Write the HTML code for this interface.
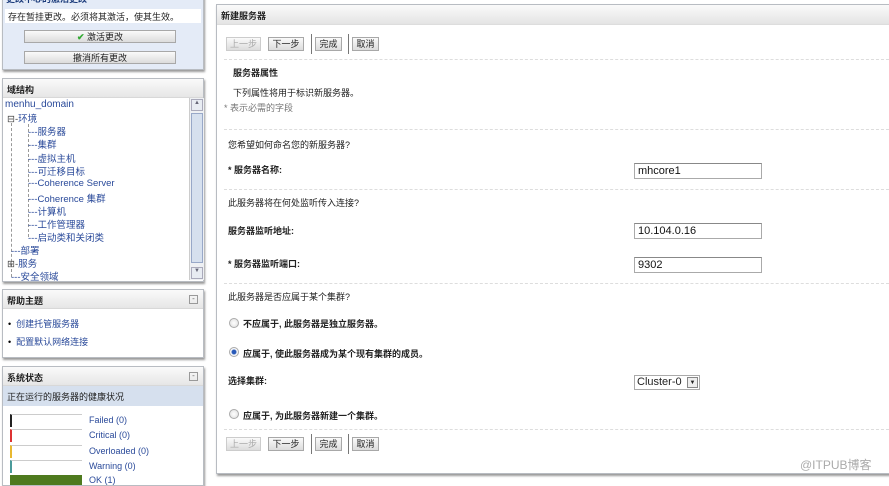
<!DOCTYPE html>
<html><head><meta charset="utf-8"><style>
*{margin:0;padding:0;box-sizing:border-box}
body{width:889px;height:479px;overflow:hidden;background:#fff;font-family:"Liberation Sans","Noto Sans CJK SC",sans-serif;font-size:9px;color:#222;position:relative}
.a{position:absolute;white-space:nowrap}
.pan{position:absolute;border:1px solid #b8bcc2;box-shadow:1px 2px 2px #9a9a9a;background:#fff}
.hd{position:absolute;left:0;right:0;top:0;height:19px;background:linear-gradient(#fafafa,#e6e6e6);border-bottom:1px solid #d8d8d8;font-weight:bold;font-size:9px;padding:4px 4px}
.btn{position:absolute;height:14px;border:1px solid #a8a8a8;background:linear-gradient(#fafafa,#dcdcdc);font-size:9px;text-align:center;line-height:12px;color:#222}
.dis{color:#aaa;border-color:#ccc}
.sep{position:absolute;width:1px;height:20px;background:#777}
.lnk{color:#2a4a9a}
.tr{font-size:9.5px}
.inp{position:absolute;left:634px;width:128px;height:16px;border:1px solid #aaa;border-top-color:#888;font-size:11px;padding:1px 3px;line-height:13px;color:#111}
.rad{position:absolute;left:229px;width:10px;height:10px;border-radius:50%;border:1px solid #aaa;background:radial-gradient(#fff,#ddd)}
.b{font-weight:bold}
.mn{position:absolute;right:5px;top:5px;width:9px;height:9px;border:1px solid #999;font-size:8px;line-height:6px;text-align:center;color:#666}
</style></head><body>

<!-- change center -->
<div class="pan" style="left:2px;top:-6px;width:202px;height:76px;background:#e4ebf7">
 <div class="a b" style="left:3px;top:-3px;color:#1a3a7a">更改中心的激活更改</div>
 <div class="a" style="left:2px;top:14px;width:196px;height:14px;background:#fff;padding:1px 3px">存在暂挂更改。必须将其激活，使其生效。</div>
 <div class="btn" style="left:21px;top:35px;width:152px;height:13px"><span style="color:#3a3;font-weight:bold">✔</span> 激活更改</div>
 <div class="btn" style="left:21px;top:56px;width:152px;height:13px">撤消所有更改</div>
</div>

<!-- domain structure -->
<div class="pan" style="left:2px;top:78px;width:202px;height:204px">
 <div class="hd">域结构</div>
 <div class="a" style="left:186px;top:19px;width:15px;height:182px;background:#eef0f3;border-left:1px solid #ccc">
  <div style="position:absolute;left:1px;top:1px;width:12px;height:12px;border:1px solid #aab;background:#e8ecf2;font-size:6px;text-align:center;color:#667">▲</div>
  <div style="position:absolute;left:1px;top:15px;width:12px;height:150px;border:1px solid #98a8c8;background:#d6e0ee"></div>
  <div style="position:absolute;left:1px;bottom:1px;width:12px;height:12px;border:1px solid #aab;background:#e8ecf2;font-size:6px;text-align:center;color:#667">▼</div>
 </div>
 <div class="a lnk" style="left:2px;top:20px;font-size:10px">menhu_domain</div>
 <div class="a" style="left:8px;top:44px;width:0;height:154px;border-left:1px dashed #999"></div>
 <div class="a" style="left:25px;top:45px;width:0;height:113px;border-left:1px dashed #999"></div>
 <div class="a lnk tr" style="left:4px;top:32px"><span style="color:#444">⊟-</span>环境</div>
 <div class="a lnk tr" style="left:25px;top:45px">---服务器</div>
 <div class="a lnk tr" style="left:25px;top:58px">---集群</div>
 <div class="a lnk tr" style="left:25px;top:72px">---虚拟主机</div>
 <div class="a lnk tr" style="left:25px;top:85px">---可迁移目标</div>
 <div class="a lnk tr" style="left:25px;top:99px">---Coherence Server</div>
 <div class="a lnk tr" style="left:25px;top:112px">---Coherence 集群</div>
 <div class="a lnk tr" style="left:25px;top:125px">---计算机</div>
 <div class="a lnk tr" style="left:25px;top:138px">---工作管理器</div>
 <div class="a lnk tr" style="left:25px;top:151px">---启动类和关闭类</div>
 <div class="a lnk tr" style="left:8px;top:164px">---部署</div>
 <div class="a lnk tr" style="left:4px;top:177px"><span style="color:#444">⊞-</span>服务</div>
 <div class="a lnk tr" style="left:8px;top:190px">---安全领域</div>
</div>

<!-- help -->
<div class="pan" style="left:2px;top:289px;width:202px;height:69px">
 <div class="hd">帮助主题</div><div class="mn">-</div>
 <div class="a lnk" style="left:5px;top:27px"><span style="color:#000">•</span>&nbsp; 创建托管服务器</div>
 <div class="a lnk" style="left:5px;top:45px"><span style="color:#000">•</span>&nbsp; 配置默认网络连接</div>
</div>

<!-- system status -->
<div class="pan" style="left:2px;top:366px;width:202px;height:120px">
 <div class="hd">系统状态</div><div class="mn">-</div>
 <div class="a" style="left:0;top:19px;width:200px;height:20px;background:#d6e0ee;padding:4px 4px">正在运行的服务器的健康状况</div>
 <div class="a" style="left:7px;top:47px;width:72px;height:13px;border-top:1px solid #ccc;border-left:2px solid #222"></div>
 <div class="a lnk" style="left:86px;top:48px">Failed (0)</div>
 <div class="a" style="left:7px;top:62px;width:72px;height:13px;border-top:1px solid #ccc;border-left:2px solid #d33"></div>
 <div class="a lnk" style="left:86px;top:63px">Critical (0)</div>
 <div class="a" style="left:7px;top:78px;width:72px;height:13px;border-top:1px solid #ccc;border-left:2px solid #e8b830"></div>
 <div class="a lnk" style="left:86px;top:79px">Overloaded (0)</div>
 <div class="a" style="left:7px;top:93px;width:72px;height:13px;border-top:1px solid #ccc;border-left:2px solid #4a9a9a"></div>
 <div class="a lnk" style="left:86px;top:94px">Warning (0)</div>
 <div class="a" style="left:7px;top:108px;width:72px;height:10px;background:#4e7a1e"></div>
 <div class="a lnk" style="left:86px;top:108px">OK (1)</div>
</div>

<!-- main panel -->
<div class="pan" style="left:216px;top:4px;width:690px;height:470px"></div>
<div class="a" style="left:217px;top:5px;width:672px;height:20px;background:linear-gradient(#fafafa,#e4e4e4);border-bottom:1px solid #ddd"></div>
<div class="a b" style="left:221px;top:9px">新建服务器</div>

<div class="btn dis" style="left:226px;top:37px;width:35px">上一步</div>
<div class="btn" style="left:268px;top:37px;width:36px">下一步</div>
<div class="sep" style="left:311px;top:34px"></div>
<div class="btn" style="left:315px;top:37px;width:27px">完成</div>
<div class="sep" style="left:348px;top:34px"></div>
<div class="btn" style="left:352px;top:37px;width:27px">取消</div>

<div class="a" style="left:224px;top:59px;width:665px;border-top:1px dashed #ddd"></div>
<div class="a b" style="left:233px;top:66px">服务器属性</div>
<div class="a" style="left:233px;top:86px">下列属性将用于标识新服务器。</div>
<div class="a" style="left:224px;top:101px;color:#777">* 表示必需的字段</div>
<div class="a" style="left:224px;top:129px;width:665px;border-top:1px dashed #ddd"></div>
<div class="a" style="left:228px;top:138px">您希望如何命名您的新服务器?</div>
<div class="a b" style="left:228px;top:163px">* 服务器名称:</div>
<div class="inp" style="top:163px">mhcore1</div>
<div class="a" style="left:224px;top:189px;width:665px;border-top:1px dashed #ddd"></div>
<div class="a" style="left:228px;top:196px">此服务器将在何处监听传入连接?</div>
<div class="a b" style="left:228px;top:224px">服务器监听地址:</div>
<div class="inp" style="top:223px">10.104.0.16</div>
<div class="a b" style="left:228px;top:257px">* 服务器监听端口:</div>
<div class="inp" style="top:257px">9302</div>
<div class="a" style="left:224px;top:283px;width:665px;border-top:1px dashed #ddd"></div>
<div class="a" style="left:228px;top:290px">此服务器是否应属于某个集群?</div>
<div class="rad" style="top:318px"></div>
<div class="a b" style="left:243px;top:317px">不应属于, 此服务器是独立服务器。</div>
<div class="rad" style="top:347px;background:radial-gradient(#2a5ab8 0,#2a5ab8 2px,#fff 3px,#ddd)"></div>
<div class="a b" style="left:243px;top:347px">应属于, 使此服务器成为某个现有集群的成员。</div>
<div class="a b" style="left:228px;top:374px">选择集群:</div>
<div class="a" style="left:634px;top:375px;width:66px;height:15px;border:1px solid #aaa;font-size:11px;padding:0 2px;line-height:13px">Cluster-0
 <div style="position:absolute;right:1px;top:1px;width:11px;height:11px;border:1px solid #888;background:#eee;font-size:6px;text-align:center;line-height:10px">▼</div></div>
<div class="rad" style="top:409px"></div>
<div class="a b" style="left:243px;top:409px">应属于, 为此服务器新建一个集群。</div>
<div class="a" style="left:224px;top:429px;width:665px;border-top:1px dashed #ddd"></div>

<div class="btn dis" style="left:226px;top:437px;width:35px">上一步</div>
<div class="btn" style="left:268px;top:437px;width:36px">下一步</div>
<div class="sep" style="left:311px;top:434px"></div>
<div class="btn" style="left:315px;top:437px;width:27px">完成</div>
<div class="sep" style="left:348px;top:434px"></div>
<div class="btn" style="left:352px;top:437px;width:27px">取消</div>

<div class="a" style="left:800px;top:456px;font-size:12px;color:#aaa">@ITPUB博客</div>
</body></html>
